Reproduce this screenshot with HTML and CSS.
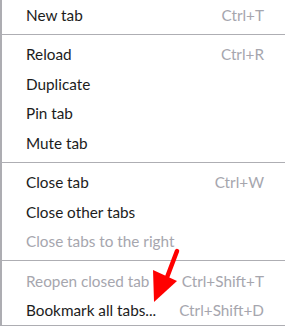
FILE: index.html
```
<!DOCTYPE html>
<html lang="en">

<head>
    <meta charset="UTF-8">
    <meta name="viewport" content="width=device-width, initial-scale=1.0">
    <title>Tab menu</title>
    <link rel="stylesheet" href="styles.css">
</head>

<body>
    <div class="menu">
        <div class="item"><span>New tab</span><span class="key">Ctrl+T</span></div>
        <div class="sep"></div>
        <div class="item"><span>Reload</span><span class="key">Ctrl+R</span></div>
        <div class="item"><span>Duplicate</span></div>
        <div class="item"><span>Pin tab</span></div>
        <div class="item"><span>Mute tab</span></div>
        <div class="sep"></div>
        <div class="item"><span>Close tab</span><span class="key">Ctrl+W</span></div>
        <div class="item"><span>Close other tabs</span></div>
        <div class="item disabled"><span>Close tabs to the right</span></div>
        <div class="sep"></div>
        <div class="item disabled"><span>Reopen closed tab</span><span class="key">Ctrl+Shift+T</span></div>
        <div class="item"><span>Bookmark all tabs...</span><span class="key">Ctrl+Shift+D</span></div>

        <!-- red arrow pointing at "Bookmark all tabs..." -->
        <svg class="arrow" width="40" height="60" viewBox="0 0 40 60">
            <line x1="28" y1="3" x2="17" y2="32" stroke="#f00" stroke-width="4.5" stroke-linecap="round" />
            <polygon points="5,54 4,22 28,33" fill="#f00" />
        </svg>
    </div>
</body>

</html>
```

FILE: styles.css
```
body {
    margin: 0;
    background: #fff;
}

.menu {
    position: relative;
    width: 283px;
    border-left: 2px solid #adadb2;
    border-bottom: 1px solid #adadb2;
    font-family: Lato, "Noto Sans", sans-serif;
    font-size: 15.3px;
    color: #1c1c1c;
}

.item {
    height: 29.5px;
    display: flex;
    justify-content: space-between;
    align-items: center;
    padding: 0 21px 0 24px;
    white-space: nowrap;
}

.key {
    color: #a6a6ae;
}

.disabled {
    color: #a6a6ae;
}

.sep {
    height: 1px;
    margin: 4px 0 5px -2px;
    background: #aeaeb3;
}

.arrow {
    position: absolute;
    left: 147px;
    top: 248px;
}
```
